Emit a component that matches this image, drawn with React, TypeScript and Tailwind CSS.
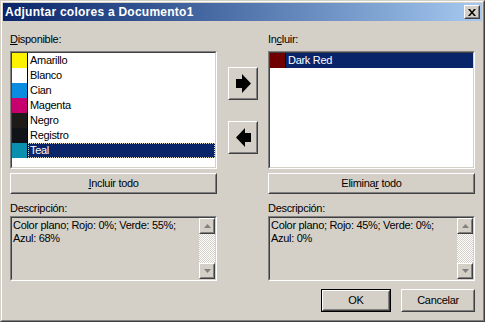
import React from "react";

type Swatch = { name: string; color: string };

const available: Swatch[] = [
  { name: "Amarillo", color: "bg-[#fff200]" },
  { name: "Blanco", color: "bg-white" },
  { name: "Cian", color: "bg-[#0a8ce0]" },
  { name: "Magenta", color: "bg-[#c8006e]" },
  { name: "Negro", color: "bg-[#1e1a18]" },
  { name: "Registro", color: "bg-[#101317]" },
  { name: "Teal", color: "bg-[#0b8fae]" },
];

function Sunken({ className = "", innerClass = "", children }: { className?: string; innerClass?: string; children?: React.ReactNode }) {
  return (
    <div className={`border border-t-[#808080] border-l-[#808080] border-r-white border-b-white ${className}`}>
      <div className={`h-full border border-t-[#404040] border-l-[#404040] border-r-[#d4d0c8] border-b-[#d4d0c8] ${innerClass}`}>
        {children}
      </div>
    </div>
  );
}

function Raised({ className = "", children }: { className?: string; children?: React.ReactNode }) {
  return (
    <div className={`border border-t-white border-l-white border-r-[#404040] border-b-[#404040] bg-[#d4d0c8] ${className}`}>
      <div className="h-full border border-t-[#d4d0c8] border-l-[#d4d0c8] border-r-[#808080] border-b-[#808080] flex items-center justify-center">
        {children}
      </div>
    </div>
  );
}

function Row({ item, selected, focus }: { item: Swatch; selected?: boolean; focus?: boolean }) {
  return (
    <div className="flex h-[15px]">
      <div className={`w-[16px] border-r border-black ${item.color}`} />
      <div
        className={`flex-1 pl-[2px] leading-[15px] ${
          selected ? "bg-[#0a246a] text-white" : "text-black"
        } ${focus ? "outline-1 outline-dotted outline-[#d8d4c0] -outline-offset-1" : ""}`}
      >
        {item.name}
      </div>
    </div>
  );
}

function ScrollArrow({ up }: { up?: boolean }) {
  return (
    <Raised className="h-[16px]">
      <svg width="7" height="4" viewBox="0 0 7 4" className={up ? "" : "rotate-180"}>
        <polygon points="3.5,0 7,4 0,4" fill="#808080" />
      </svg>
    </Raised>
  );
}

function Description({ lines }: { lines: string[] }) {
  return (
    <Sunken className="h-[65px]" innerClass="flex bg-[#d4d0c8]">
      <div className="flex-1 pl-px pt-[1px] leading-[13px]">
        {lines.map((l) => (
          <div key={l}>{l}</div>
        ))}
      </div>
      <div className="w-[16px] flex flex-col">
        <ScrollArrow up />
        <div className="flex-1 bg-[repeating-conic-gradient(#d4d0c8_0%_25%,#ffffff_0%_50%)] bg-[length:2px_2px]" />
        <ScrollArrow />
      </div>
    </Sunken>
  );
}

function ArrowIcon({ left }: { left?: boolean }) {
  return (
    <svg width="15" height="19" viewBox="0 0 15 19" className={left ? "-scale-x-100" : ""}>
      <polygon points="0,5 6,5 6,0 15,9.5 6,19 6,14 0,14" fill="#000" />
    </svg>
  );
}

export default function App() {
  return (
    <div className="w-[485px] h-[322px] text-[11px] tracking-[-0.3px] text-black font-['Liberation_Sans',Arial,sans-serif] select-none">
      <div className="h-full border border-t-[#d4d0c8] border-l-[#d4d0c8] border-r-[#404040] border-b-[#404040]">
        <div className="h-full border border-t-white border-l-white border-r-[#808080] border-b-[#808080] bg-[#d4d0c8] p-px flex flex-col">
          {/* Title bar */}
          <div className="h-[18px] flex items-center bg-gradient-to-r from-[#0a246a] to-[#a6caf0] pl-[2px] pr-[2px]">
            <span className="flex-1 text-white text-[12px] font-bold tracking-[0.25px] leading-[18px]">
              Adjuntar colores a Documento1
            </span>
            <Raised className="w-[16px] h-[14px]">
              <svg width="8" height="7" viewBox="0 0 8 7">
                <path d="M0 0h2l2 2.5L6 0h2L5 3.5 8 7H6L4 4.5 2 7H0l3-3.5z" fill="#000" />
              </svg>
            </Raised>
          </div>

          {/* Body */}
          <div className="flex-1 pl-[7px] pr-[7px] pt-[12px]">
            <div className="flex">
              {/* Available */}
              <div className="w-[207px]">
                <div className="h-[18px] leading-[13px]">
                  <span className="underline">D</span>isponible:
                </div>
                <Sunken className="h-[118px]" innerClass="bg-white">
                  {available.map((it) => (
                    <Row key={it.name} item={it} selected={it.name === "Teal"} focus={it.name === "Teal"} />
                  ))}
                </Sunken>
                <Raised className="mt-[4px] h-[21px]">
                  <span>
                    <span className="underline">I</span>ncluir todo
                  </span>
                </Raised>
                <div className="h-[22px] pt-[8px] leading-[13px]">Descripción:</div>
                <Description lines={["Color plano; Rojo: 0%; Verde: 55%;", "Azul: 68%"]} />
              </div>

              {/* Move buttons */}
              <div className="w-[30px] ml-[11px] pt-[34px] flex flex-col gap-[21px]">
                <Raised className="h-[33px]">
                  <ArrowIcon />
                </Raised>
                <Raised className="h-[33px]">
                  <ArrowIcon left />
                </Raised>
              </div>

              {/* Included */}
              <div className="w-[207px] ml-[10px]">
                <div className="h-[18px] leading-[13px]">
                  In<span className="underline">c</span>luir:
                </div>
                <Sunken className="h-[118px]" innerClass="bg-white">
                  <Row item={{ name: "Dark Red", color: "bg-[#700000]" }} selected />
                </Sunken>
                <Raised className="mt-[4px] h-[21px]">
                  <span>
                    Elimina<span className="underline">r</span> todo
                  </span>
                </Raised>
                <div className="h-[22px] pt-[8px] leading-[13px]">Descripción:</div>
                <Description lines={["Color plano; Rojo: 45%; Verde: 0%;", "Azul: 0%"]} />
              </div>
            </div>

            {/* Dialog buttons */}
            <div className="flex justify-end gap-[10px] mt-[8px]">
              <div className="border border-black">
                <Raised className="w-[68px] h-[21px]">OK</Raised>
              </div>
              <Raised className="w-[74px] h-[23px]">Cancelar</Raised>
            </div>
          </div>
        </div>
      </div>
    </div>
  );
}
